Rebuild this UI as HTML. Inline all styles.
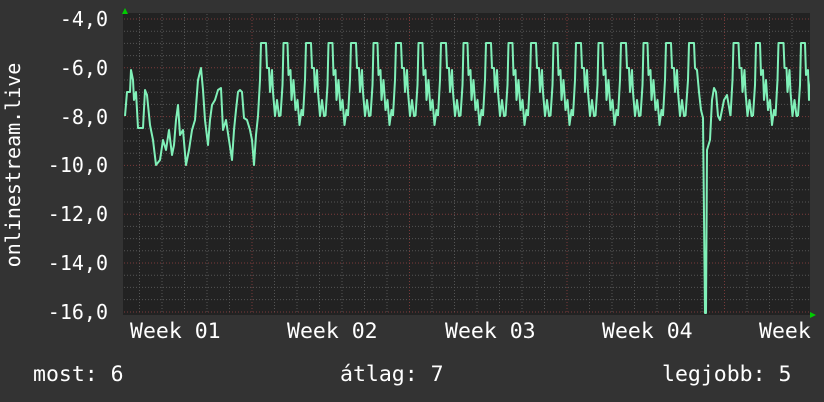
<!DOCTYPE html>
<html><head><meta charset="utf-8"><style>
html,body{margin:0;padding:0;background:#333;}
svg{display:block;}
text{font-family:"DejaVu Sans Mono","Liberation Mono",monospace;font-size:21.5px;fill:#fff;}
.y{font-size:20px;}
</style></head><body>
<svg width="824" height="402" viewBox="0 0 824 402" xmlns="http://www.w3.org/2000/svg">
<rect width="824" height="402" fill="#333"/>
<rect x="123" y="13" width="687" height="302" fill="#222"/>
<defs>
<clipPath id="c"><rect x="123" y="13" width="687" height="302"/></clipPath>
<path id="d" d="M0,116 L2,80 L3,43 L8,43 L9,68 L11,68 L12,92 L14,70 L15,92 L17,116 L19,100 L21,116 L22.5,116" fill="none"/>
<path id="e" d="M0,116 L2,85 L3,43 L7,43 L8,75 L10,70 L11,100 L13,80 L15,110 L17,100 L19,125 L21,110 L22.5,116" fill="none"/>
</defs>
<g stroke="#555" stroke-width="1" stroke-dasharray="1,2" fill="none">
<path d="M124,31.2H810M124,43.4H810M124,55.6H810M124,80H810M124,92.2H810M124,104.4H810M124,128.8H810M124,141H810M124,153.2H810M124,177.6H810M124,189.8H810M124,202H810M124,226.4H810M124,238.6H810M124,250.8H810M124,275.2H810M124,287.4H810M124,299.6H810"/>
<path d="M139.5,14V314M162,14V314M184.5,14V314M207,14V314M229.5,14V314M274.5,14V314M297,14V314M319.5,14V314M342,14V314M364.5,14V314M387,14V314M432,14V314M454.5,14V314M477,14V314M499.5,14V314M522,14V314M544.5,14V314M589.5,14V314M612,14V314M634.5,14V314M657,14V314M679.5,14V314M702,14V314M747,14V314M769.5,14V314M792,14V314"/>
</g>
<g stroke="#7a3a3a" stroke-width="1" stroke-dasharray="1,2" fill="none">
<path d="M124,19H810M124,67.8H810M124,116.6H810M124,165.4H810M124,214.2H810M124,263H810M124,312H810"/>
<path d="M252,14V314M409.5,14V314M567,14V314M724.5,14V314"/>
</g>
<g clip-path="url(#c)" stroke="#80f0b8" stroke-width="2" fill="none" stroke-linejoin="round">
<polyline points="125,116 127,92 130,92 131,70 133,80 134,100 136,92 138,128 143,128 145,90 147,95 150,125 153,140 156,165 160,160 163,140 166,150 169,130 172,155 174,145 176,120 178,105 180,135 183,130 186,165 189,150 192,130 195,120 198,80 201,68 203,90 205,120 208,145 210,120 212,105 215,100 218,90 221,88 223,130 226,120 229,140 232,160 234,130 236,110 238,92 240,90 242,92 244,118 247,120 250,130 252,140 254,165 256,135 258,116"/>
<use href="#d" x="258"/><use href="#e" x="280.5"/><use href="#d" x="303"/><use href="#e" x="325.5"/><use href="#d" x="348"/><use href="#e" x="370.5"/><use href="#d" x="393"/><use href="#e" x="415.5"/><use href="#d" x="438"/><use href="#e" x="460.5"/><use href="#d" x="483"/><use href="#e" x="505.5"/><use href="#d" x="528"/><use href="#e" x="550.5"/><use href="#d" x="573"/><use href="#e" x="595.5"/><use href="#d" x="618"/><use href="#e" x="640.5"/><use href="#d" x="663"/>
<polyline points="685.5,116 688,80 689,43 694,43 695,68 697,70 699,92 701,110 703,118 705,313 706,313 707,150 710,140 712,100 714,88 716,92 718,116 720,120 724,100 727,95 730.5,116"/>
<use href="#d" x="730.5"/><use href="#e" x="753"/><use href="#d" x="775.5"/><use href="#e" x="798"/>
</g>
<polygon points="125,8 122,14 128,14" fill="#0c0"/>
<polygon points="816,315 810,312 810,318" fill="#0c0"/>
<g text-anchor="end" class="y">
<text class="y" x="108" y="26">-4,0</text>
<text class="y" x="108" y="75">-6,0</text>
<text class="y" x="108" y="124">-8,0</text>
<text class="y" x="108" y="172">-10,0</text>
<text class="y" x="108" y="221">-12,0</text>
<text class="y" x="108" y="270">-14,0</text>
<text class="y" x="108" y="319">-16,0</text>
</g>
<text class="y" transform="translate(20,165) rotate(-90)" text-anchor="middle">onlinestream.live</text>
<text x="130" y="338">Week 01</text>
<text x="287" y="338">Week 02</text>
<text x="445" y="338">Week 03</text>
<text x="602" y="338">Week 04</text>
<text x="759" y="338">Week</text>
<text x="33" y="381">most: 6</text>
<text x="340" y="381">átlag: 7</text>
<text x="662" y="381">legjobb: 5</text>
</svg>
</body></html>
